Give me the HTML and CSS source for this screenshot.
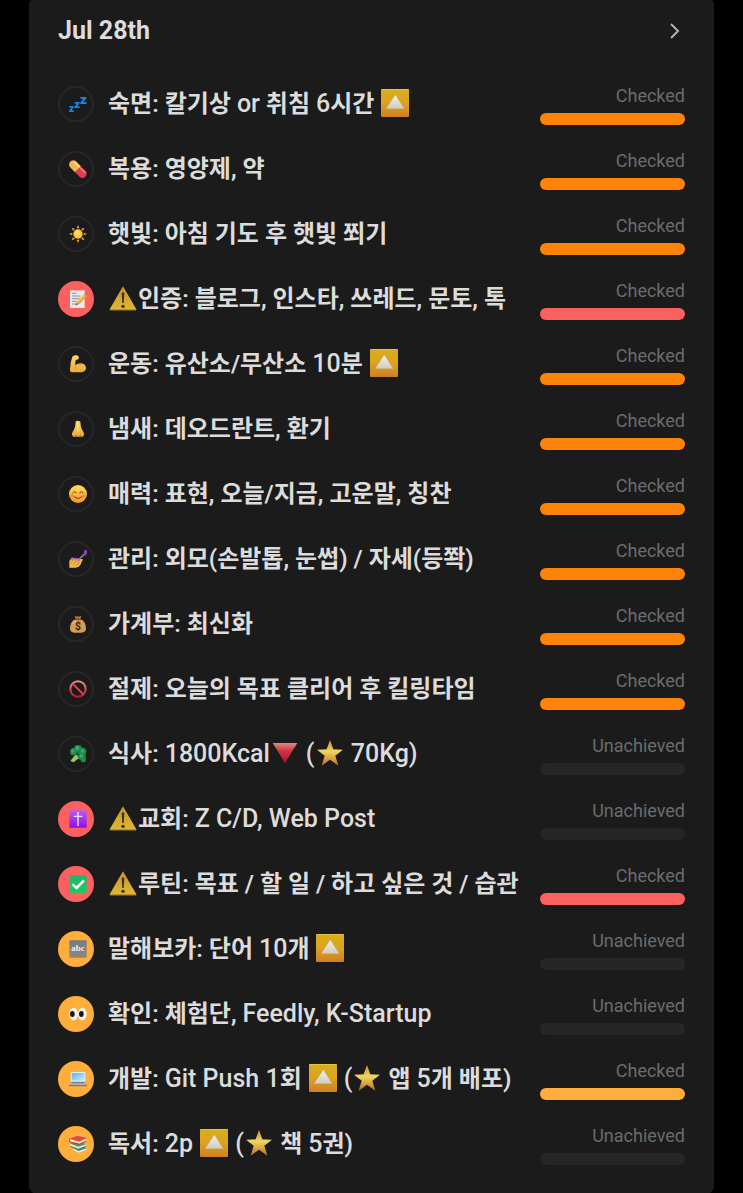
FILE: index.html
```
<!DOCTYPE html>
<html lang="ko">
<head>
    <meta charset="UTF-8">
    <meta name="viewport" content="width=device-width, initial-scale=1.0">
    <title>Jul 28th</title>
    <link rel="stylesheet" href="styles.css">
</head>
<body>

<svg class="sprite" width="0" height="0" aria-hidden="true">
    <defs>
        <linearGradient id="gold" x1="0" y1="0" x2="0" y2="1"><stop offset="0" stop-color="#d8ad1c"/><stop offset=".5" stop-color="#dba322"/><stop offset="1" stop-color="#cf7f24"/></linearGradient>
        <linearGradient id="silver" x1="0" y1="0" x2="0" y2="1"><stop offset="0" stop-color="#f2f2ee"/><stop offset="1" stop-color="#cfccc2"/></linearGradient>
        <linearGradient id="warn" x1="0" y1="0" x2="0" y2="1"><stop offset="0" stop-color="#c99425"/><stop offset="1" stop-color="#e0b837"/></linearGradient>
        <linearGradient id="starFill" x1="0" y1="0" x2="0" y2="1"><stop offset="0" stop-color="#c98f35"/><stop offset=".45" stop-color="#efd65c"/><stop offset="1" stop-color="#bd6c28"/></linearGradient>
        <linearGradient id="redDown" x1="0" y1="0" x2="0" y2="1"><stop offset="0" stop-color="#e08a85"/><stop offset=".4" stop-color="#cf3342"/><stop offset="1" stop-color="#b01230"/></linearGradient>
        <linearGradient id="skin" x1="0" y1="0" x2="0" y2="1"><stop offset="0" stop-color="#ffd95c"/><stop offset="1" stop-color="#e9a83c"/></linearGradient>
        <linearGradient id="face" x1="0" y1="0" x2="0" y2="1"><stop offset="0" stop-color="#ffe05a"/><stop offset="1" stop-color="#f5942a"/></linearGradient>
        <linearGradient id="ban" x1="0" y1="0" x2="0" y2="1"><stop offset="0" stop-color="#e88b80"/><stop offset="1" stop-color="#c4123f"/></linearGradient>
        <linearGradient id="violet" x1="0" y1="0" x2="0" y2="1"><stop offset="0" stop-color="#c25af0"/><stop offset="1" stop-color="#8a10e8"/></linearGradient>
        <linearGradient id="green" x1="0" y1="0" x2="0" y2="1"><stop offset="0" stop-color="#25b56c"/><stop offset="1" stop-color="#12cf62"/></linearGradient>
        <linearGradient id="grey" x1="0" y1="0" x2="0" y2="1"><stop offset="0" stop-color="#737d82"/><stop offset="1" stop-color="#93837c"/></linearGradient>
        <linearGradient id="screen" x1="0" y1="0" x2="1" y2="1"><stop offset="0" stop-color="#5fb4ec"/><stop offset="1" stop-color="#c8ecfb"/></linearGradient>
    </defs>

    <!-- glyphs used inside the titles -->
    <symbol id="up" viewBox="0 0 84 84">
        <rect width="84" height="84" rx="3" fill="url(#gold)"/>
        <path d="M1 1.500H83" stroke="#e8d05c" stroke-width="2"/>
        <path d="M43 17 70 59H15Z" fill="url(#silver)" stroke="#cda64d" stroke-width="1"/>
    </symbol>
    <symbol id="warning" viewBox="0 0 84 84">
        <path d="M42 7 82 76Q83 79 80 79H4Q1 79 2 76Z" fill="url(#warn)"/>
        <path d="M3 77H81" stroke="#b9862c" stroke-width="3"/>
        <path d="M38 27Q42 23 46 27L44 57H40Z" fill="#37310f"/>
        <circle cx="42" cy="67" r="5" fill="#37310f"/>
    </symbol>
    <symbol id="star" viewBox="0 0 84 84">
        <path d="M42 3 52 31 81 32 58 50 67 80 42 62 17 80 26 50 3 32 32 31Z" fill="url(#starFill)"/>
    </symbol>
    <symbol id="down" viewBox="0 0 84 84">
        <path d="M5 12H79L42 72Z" fill="url(#redDown)"/>
    </symbol>

    <!-- badge icons -->
    <symbol id="pill" viewBox="0 0 54 54">
        <g transform="rotate(45 27 27)">
            <rect x="-5" y="15" width="64" height="25" rx="12.500" fill="#df3a4e"/>
            <path d="M27 15H8a12.500 12.500 0 0 0 0 25H27Z" fill="#f4b94c"/>
            <path d="M4 20H24" stroke="#ffe3a0" stroke-width="5" stroke-linecap="round"/>
            <path d="M31 20H50" stroke="#f4868c" stroke-width="4" stroke-linecap="round"/>
        </g>
    </symbol>
    <symbol id="sun" viewBox="0 0 54 54">
        <g fill="#f5a623">
            <path d="M23 10 27 0 31 10Z"/>
            <path d="M23 10 27 0 31 10Z" transform="rotate(45 27 27)"/>
            <path d="M23 10 27 0 31 10Z" transform="rotate(90 27 27)"/>
            <path d="M23 10 27 0 31 10Z" transform="rotate(135 27 27)"/>
            <path d="M23 10 27 0 31 10Z" transform="rotate(180 27 27)"/>
            <path d="M23 10 27 0 31 10Z" transform="rotate(225 27 27)"/>
            <path d="M23 10 27 0 31 10Z" transform="rotate(270 27 27)"/>
            <path d="M23 10 27 0 31 10Z" transform="rotate(315 27 27)"/>
        </g>
        <circle cx="27" cy="27" r="14" fill="#ffc535"/>
        <circle cx="25" cy="24" r="8" fill="#ffdc68"/>
    </symbol>
    <symbol id="memo" viewBox="0 0 54 54">
        <path d="M3 1H47V54H3Z" fill="#e9e9e9"/>
        <path d="M9 10H22M9 18H34M9 26H32M9 34H25M9 42H22" stroke="#8c9196" stroke-width="3"/>
        <path d="M20 46 24 35 46 11 54 18 32 42Z" fill="#e8a33a"/>
        <path d="M24 35 46 11 50 14 27 39Z" fill="#f6c45c"/>
        <path d="M46 11 49 8Q53 7 55 11L54 18Z" fill="#d86a6a"/>
        <path d="M20 46 22 40 26 43Z" fill="#4a3a2a"/>
    </symbol>
    <symbol id="arm" viewBox="0 0 54 54">
        <path d="M10 5Q15 0 24 1Q30 3 30 9Q29 14 23 14Q20 14 19 20L19 31Q26 24 38 25Q51 28 51 40Q50 50 38 52H9Q2 52 3 43Q4 20 10 5Z" fill="url(#skin)"/>
        <path d="M20 33Q18 38 22 42M39 27Q32 27 27 32" fill="none" stroke="#c98220" stroke-width="2"/>
    </symbol>
    <symbol id="nose" viewBox="0 0 54 54">
        <path d="M20 4Q27 0 34 5Q35 25 43 35Q48 45 41 50H13Q6 44 11 35Q20 24 20 4Z" fill="url(#skin)"/>
        <path d="M17 48Q21 43 25 49ZM30 49Q34 43 38 48Z" fill="#865a1c"/>
        <path d="M27 8V37" stroke="#ffe58c" stroke-width="3"/>
    </symbol>
    <symbol id="smile" viewBox="0 0 54 54">
        <circle cx="27" cy="27" r="27" fill="url(#face)"/>
        <circle cx="10" cy="33" r="6" fill="#f2783a" opacity=".6"/>
        <circle cx="44" cy="33" r="6" fill="#f2783a" opacity=".6"/>
        <path d="M12 24Q17 15 22 24M32 24Q37 15 42 24M16 35Q27 46 38 35" fill="none" stroke="#6b3a12" stroke-width="3" stroke-linecap="round"/>
    </symbol>
    <symbol id="nails" viewBox="0 0 54 54">
        <path d="M1 53V34Q4 25 10 25L42 28 35 43Q30 53 20 53Z" fill="#edb949"/>
        <path d="M12 30 6 40M22 31 14 45M32 32 23 47" stroke="#ba7b2a" stroke-width="2"/>
        <g fill="#a75fc8"><path d="M7 22 13 22 12 30 6 30ZM17 23 23 23 22 31 16 31ZM27 24 33 24 31 33 26 32Z"/></g>
        <path d="M33 25 46 13" stroke="#a78fb0" stroke-width="4"/>
        <path d="M45 2 54 -2 56 9 49 17 44 11Z" fill="#8b3cc2"/>
    </symbol>
    <symbol id="prohibit" viewBox="0 0 54 54">
        <circle cx="27" cy="27" r="23" fill="none" stroke="url(#ban)" stroke-width="6"/>
        <path d="M11 11 43 43" stroke="#d44b5c" stroke-width="6"/>
    </symbol>
    <symbol id="broccoli" viewBox="0 0 54 54">
        <path d="M4 48 20 28 35 38 25 43 14 52Z" fill="#9fc45a"/>
        <g fill="#1f8a4c"><circle cx="14" cy="20" r="11"/><circle cx="27" cy="12" r="12"/><circle cx="41" cy="19" r="11"/><circle cx="38" cy="33" r="12"/><circle cx="43" cy="44" r="8"/></g>
        <g fill="#37ad65"><circle cx="25" cy="9" r="6"/><circle cx="12" cy="18" r="5"/><circle cx="40" cy="18" r="5"/><circle cx="37" cy="33" r="5"/></g>
        <path d="M22 22 31 29" stroke="#12613a" stroke-width="3"/>
    </symbol>
    <symbol id="cross" viewBox="0 0 54 54">
        <rect x="1" y="1" width="52" height="52" rx="2" fill="url(#violet)"/>
        <path d="M27 6V48M14 19H40" stroke="#f5eafa" stroke-width="4"/>
    </symbol>
    <symbol id="check" viewBox="0 0 54 54">
        <rect x="1" y="1" width="52" height="52" rx="2" fill="url(#green)"/>
        <path d="M10 28 23 39 45 16" fill="none" stroke="#f3f7f4" stroke-width="8"/>
    </symbol>
    <symbol id="eyes" viewBox="0 0 54 54">
        <ellipse cx="14" cy="27" rx="13" ry="19" fill="#f4f2ee"/>
        <ellipse cx="40" cy="27" rx="13" ry="19" fill="#f4f2ee"/>
        <ellipse cx="10" cy="27" rx="7" ry="9" fill="#1d1712"/>
        <ellipse cx="37" cy="27" rx="7" ry="9" fill="#1d1712"/>
    </symbol>
    <symbol id="laptop" viewBox="0 0 54 54">
        <rect x="5" y="6" width="44" height="29" rx="2" fill="#e8eef2"/>
        <rect x="8" y="9" width="38" height="23" fill="url(#screen)"/>
        <path d="M6 35H48L54 46H0Z" fill="#aeb0b6"/>
        <path d="M8 38H46" stroke="#6f757d" stroke-width="3"/>
        <path d="M0 47H54" stroke="#6e6a6c" stroke-width="3"/>
    </symbol>
    <symbol id="books" viewBox="0 0 54 54">
        <path d="M12 37 38 31 54 42 29 52Z" fill="#3a8d9c"/>
        <path d="M14 41 29 48 53 40V44L29 53 14 46Z" fill="#e6eee9"/>
        <path d="M3 25 29 20 53 28 28 37Z" fill="#4f9a4b"/>
        <path d="M4 27 28 35 52 28V33L28 43 4 34Z" fill="#ece7dc"/>
        <path d="M4 34 28 43 52 34" fill="none" stroke="#41773d" stroke-width="3"/>
        <path d="M1 11 25 2 54 9 30 20Z" fill="#e04c4f"/>
        <path d="M1 12 30 21 53 11V17L31 26 2 19Z" fill="#f0e8df"/>
        <path d="M1 11V20L31 28 52 18" fill="none" stroke="#bd2f3b" stroke-width="3"/>
    </symbol>
</svg>

<main class="card">
    <header class="card-header">
        <h1>Jul 28th</h1>
        <button class="next-btn" type="button" aria-label="Next">
            <svg viewBox="0 0 12 18"><path d="M2 2 9 9 2 16"/></svg>
        </button>
    </header>

    <ul class="habits">
        <li class="habit orange done">
            <span class="badge"><svg viewBox="0 0 54 54"><text class="zzz" x="0" y="50" font-size="30">z<tspan dy="-10" font-size="34">z</tspan><tspan dy="-13" font-size="40">z</tspan></text></svg></span>
            <span class="title">숙면: 칼기상 <span class="en">or</span> 취침 <span class="en">6</span>시간 <svg class="emoji"><use href="#up"/></svg></span>
            <div class="status">Checked<div class="bar"></div></div>
        </li>
        <li class="habit orange done">
            <span class="badge"><svg><use href="#pill"/></svg></span>
            <span class="title">복용: 영양제, 약</span>
            <div class="status">Checked<div class="bar"></div></div>
        </li>
        <li class="habit orange done">
            <span class="badge"><svg><use href="#sun"/></svg></span>
            <span class="title">햇빛: 아침 기도 후 햇빛 쬐기</span>
            <div class="status">Checked<div class="bar"></div></div>
        </li>
        <li class="habit red done">
            <span class="badge"><svg><use href="#memo"/></svg></span>
            <span class="title"><svg class="emoji"><use href="#warning"/></svg>인증: 블로그, 인스타, 쓰레드, 문토, 톡</span>
            <div class="status">Checked<div class="bar"></div></div>
        </li>
        <li class="habit orange done">
            <span class="badge"><svg><use href="#arm"/></svg></span>
            <span class="title">운동: 유산소/무산소 <span class="en">10</span>분 <svg class="emoji"><use href="#up"/></svg></span>
            <div class="status">Checked<div class="bar"></div></div>
        </li>
        <li class="habit orange done">
            <span class="badge"><svg><use href="#nose"/></svg></span>
            <span class="title">냄새: 데오드란트, 환기</span>
            <div class="status">Checked<div class="bar"></div></div>
        </li>
        <li class="habit orange done">
            <span class="badge"><svg><use href="#smile"/></svg></span>
            <span class="title">매력: 표현, 오늘/지금, 고운말, 칭찬</span>
            <div class="status">Checked<div class="bar"></div></div>
        </li>
        <li class="habit orange done">
            <span class="badge"><svg><use href="#nails"/></svg></span>
            <span class="title">관리: 외모(손발톱, 눈썹) / 자세(등쫙)</span>
            <div class="status">Checked<div class="bar"></div></div>
        </li>
        <li class="habit orange done">
            <span class="badge">
                <svg viewBox="0 0 54 54">
                    <path d="M17 2Q27 7 37 2L34 12H20Z" fill="#b87736"/>
                    <path d="M20 12H34Q51 20 51 40Q51 53 38 53H16Q3 53 3 40Q3 20 20 12Z" fill="#d79b4f"/>
                    <path d="M18 13H36" stroke="#7c4a1c" stroke-width="4"/>
                    <path d="M11 27Q15 20 20 18" stroke="#edc487" stroke-width="4" fill="none"/>
                    <text class="dollar" x="27" y="45" text-anchor="middle">$</text>
                </svg>
            </span>
            <span class="title">가계부: 최신화</span>
            <div class="status">Checked<div class="bar"></div></div>
        </li>
        <li class="habit orange done">
            <span class="badge"><svg><use href="#prohibit"/></svg></span>
            <span class="title">절제: 오늘의 목표 클리어 후 킬링타임</span>
            <div class="status">Checked<div class="bar"></div></div>
        </li>
        <li class="habit orange">
            <span class="badge"><svg><use href="#broccoli"/></svg></span>
            <span class="title">식사: <span class="en">1800Kcal</span><svg class="emoji"><use href="#down"/></svg> <span class="en">(<svg class="emoji"><use href="#star"/></svg> 70Kg)</span></span>
            <div class="status">Unachieved<div class="bar"></div></div>
        </li>
        <li class="habit red">
            <span class="badge"><svg><use href="#cross"/></svg></span>
            <span class="title"><svg class="emoji"><use href="#warning"/></svg>교회: <span class="en">Z C/D, Web Post</span></span>
            <div class="status">Unachieved<div class="bar"></div></div>
        </li>
        <li class="habit red done">
            <span class="badge"><svg><use href="#check"/></svg></span>
            <span class="title"><svg class="emoji"><use href="#warning"/></svg>루틴: 목표 / 할 일 / 하고 싶은 것 / 습관</span>
            <div class="status">Checked<div class="bar"></div></div>
        </li>
        <li class="habit yellow">
            <span class="badge">
                <svg viewBox="0 0 54 54">
                    <rect x="1" y="1" width="52" height="52" rx="2" fill="url(#grey)"/>
                    <text class="abc" x="27" y="34" text-anchor="middle">abc</text>
                </svg>
            </span>
            <span class="title">말해보카: 단어 <span class="en">10</span>개 <svg class="emoji"><use href="#up"/></svg></span>
            <div class="status">Unachieved<div class="bar"></div></div>
        </li>
        <li class="habit yellow">
            <span class="badge"><svg><use href="#eyes"/></svg></span>
            <span class="title">확인: 체험단, <span class="en">Feedly, K-Startup</span></span>
            <div class="status">Unachieved<div class="bar"></div></div>
        </li>
        <li class="habit yellow done">
            <span class="badge"><svg><use href="#laptop"/></svg></span>
            <span class="title">개발: <span class="en">Git Push 1</span>회 <svg class="emoji"><use href="#up"/></svg> <span class="en">(<svg class="emoji"><use href="#star"/></svg> </span>앱 <span class="en">5</span>개 배포)</span>
            <div class="status">Checked<div class="bar"></div></div>
        </li>
        <li class="habit yellow">
            <span class="badge"><svg><use href="#books"/></svg></span>
            <span class="title">독서: <span class="en">2p <svg class="emoji"><use href="#up"/></svg> (<svg class="emoji"><use href="#star"/></svg> </span>책 <span class="en">5</span>권)</span>
            <div class="status">Unachieved<div class="bar"></div></div>
        </li>
    </ul>
</main>

</body>
</html>
```

FILE: styles.css
```
* {
    box-sizing: border-box;
}
body {
    margin: 0;
    background: #000;
    color: #dcdcdc;
    font-family: Roboto, "Noto Sans CJK KR", sans-serif;
}
.sprite {
    position: absolute;
}
.card {
    margin: 0 29px;
    padding: 16px 29px 18px;
    background: #1b1b1b;
    border-radius: 4px 4px 8px 8px;
}
.card-header {
    display: flex;
    justify-content: space-between;
    align-items: center;
    margin-bottom: 25px;
}
h1 {
    margin: 0;
    font-size: 25px;
    line-height: 30px;
    font-weight: 700;
}
.next-btn {
    display: flex;
    padding: 0 4px;
    background: none;
    border: none;
    cursor: pointer;
}
.next-btn svg {
    width: 12px;
    height: 18px;
    fill: none;
    stroke: #b4b4b4;
    stroke-width: 2;
}
.habits {
    margin: 0;
    padding: 0;
    list-style: none;
}
.habit {
    display: flex;
    align-items: center;
    height: 65px;
}
.badge {
    display: flex;
    align-items: center;
    justify-content: center;
    flex: none;
    width: 36px;
    height: 36px;
    margin-right: 14px;
    padding-left: 4px;
    border-radius: 50%;
}
.badge svg {
    width: 18px;
    height: 18px;
    overflow: visible;
}
.zzz {
    fill: #158ce2;
    font-weight: 900;
}
.dollar {
    fill: #2d2417;
    font-size: 31px;
    font-weight: 700;
}
.abc {
    fill: #f1f1f1;
    font-family: "Liberation Serif", serif;
    font-size: 27px;
    font-weight: 700;
}
.title {
    flex: 1;
    font-size: 24px;
    line-height: 30px;
    font-weight: 600;
    white-space: nowrap;
}
.en {
    font-size: 25px;
    font-weight: 500;
}
.emoji {
    width: 28px;
    height: 28px;
    margin: 0 1px;
    vertical-align: -5px;
}
.status {
    flex: none;
    width: 145px;
    color: #6b6b6b;
    font-size: 18px;
    line-height: 26px;
    text-align: right;
}
.bar {
    height: 12px;
    margin-top: 4px;
    border-radius: 6px;
    background: #262626;
}

.orange .badge {
    border: 2px solid #262626;
}
.red .badge {
    background: #fd615f;
}
.yellow .badge {
    background: #ffad3b;
}
.orange.done .bar {
    background: #ff8209;
}
.red.done .bar {
    background: #fd615f;
}
.yellow.done .bar {
    background: #ffad3b;
}
```
